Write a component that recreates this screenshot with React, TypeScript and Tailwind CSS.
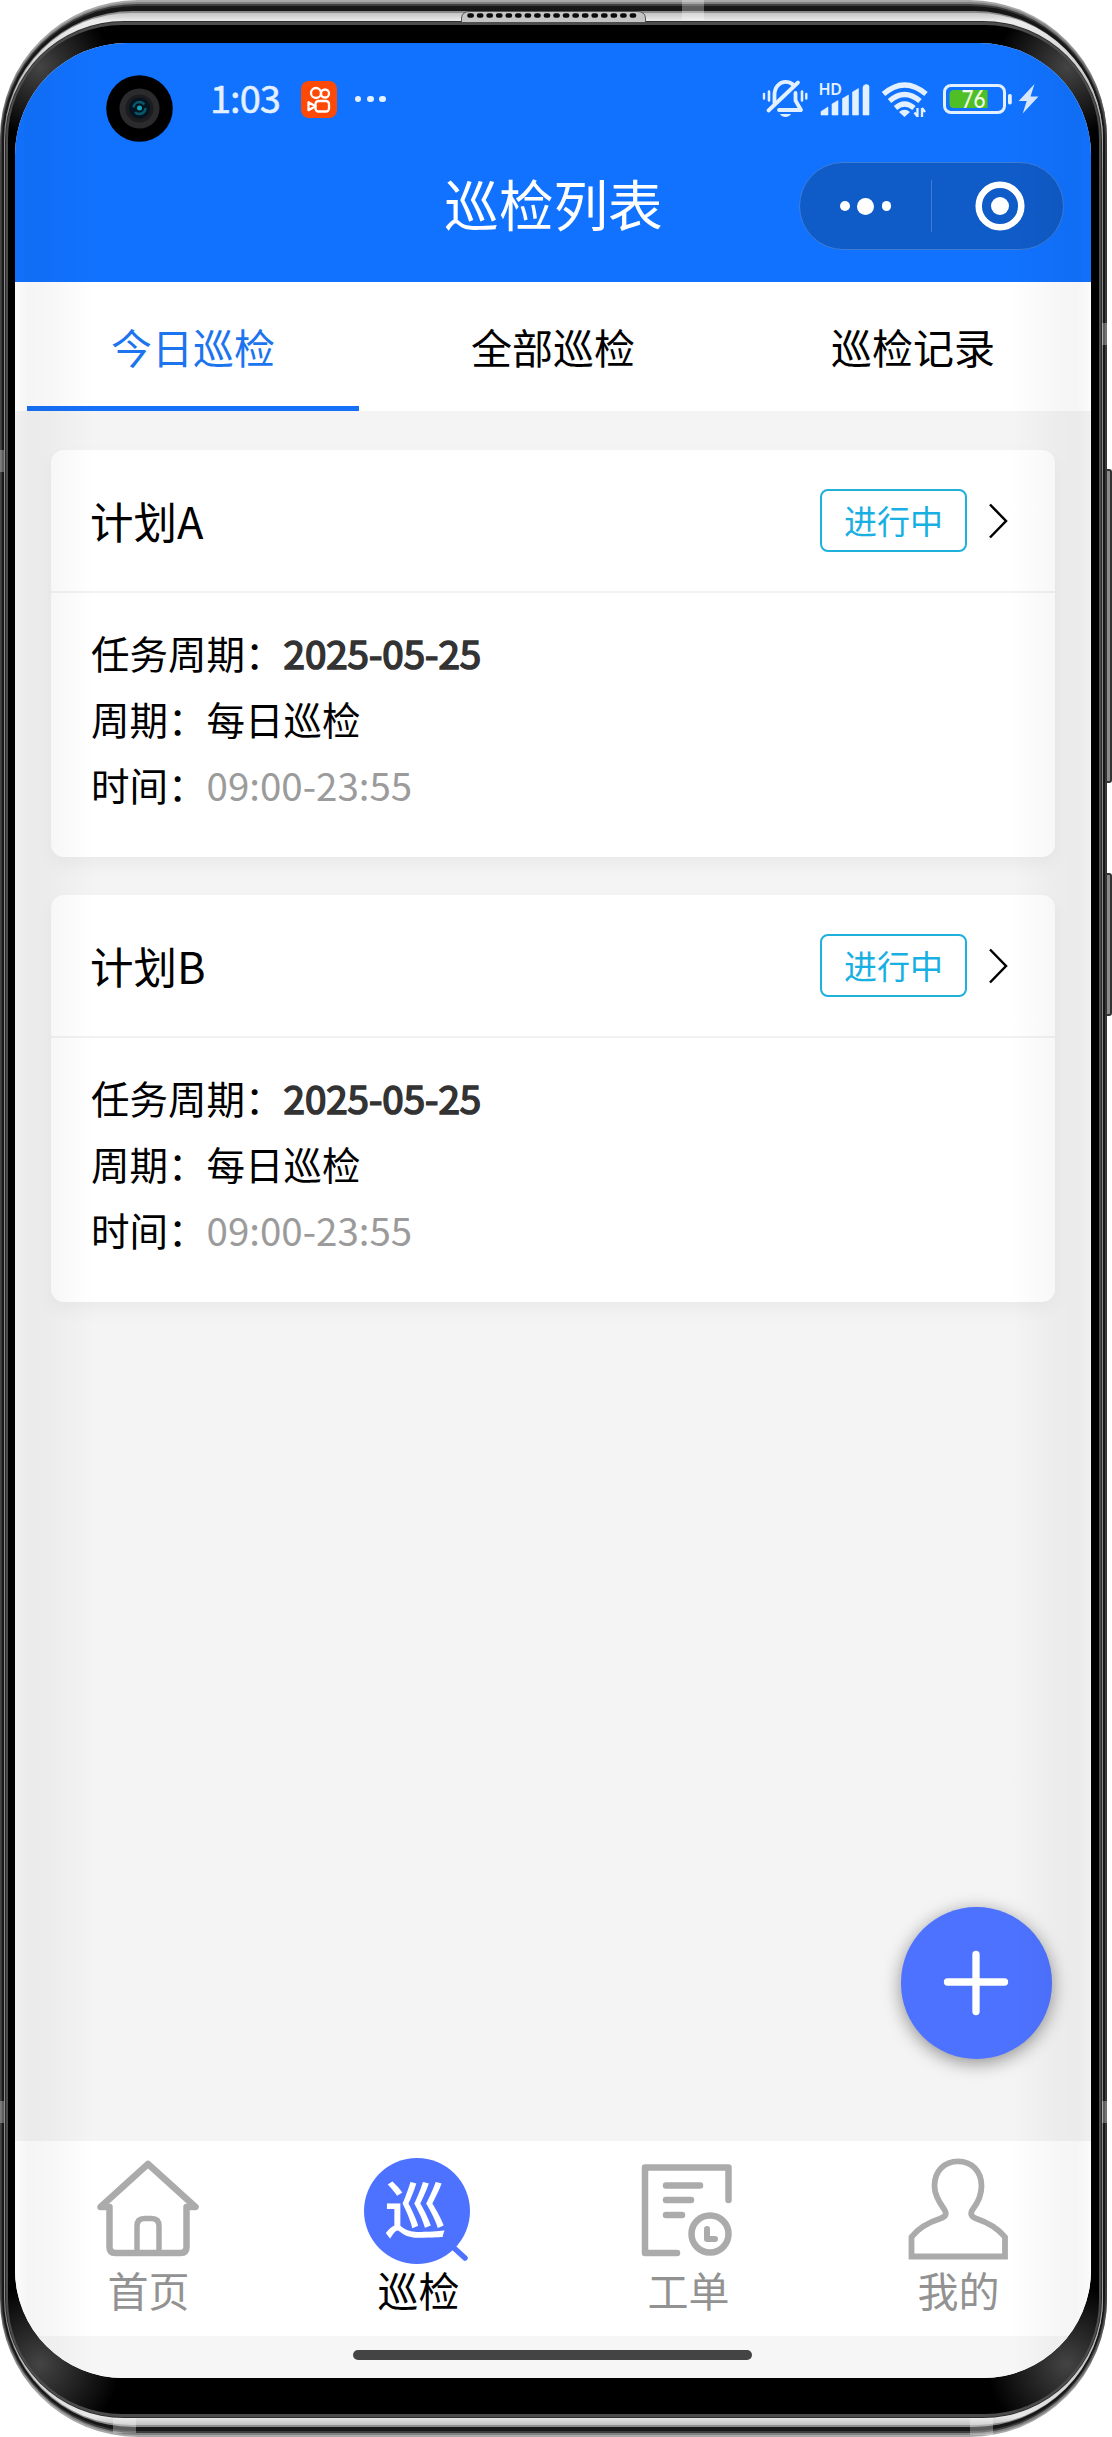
import { useState } from 'react';
import type { ReactNode } from 'react';

type Plan = { id: number; name: string; status: string; date: string; cycle: string; time: string };

const TABS = ['今日巡检', '全部巡检', '巡检记录'];

const PLANS: Plan[] = [
  { id: 1, name: '计划A', status: '进行中', date: '2025-05-25', cycle: '每日巡检', time: '09:00-23:55' },
  { id: 2, name: '计划B', status: '进行中', date: '2025-05-25', cycle: '每日巡检', time: '09:00-23:55' },
];

function Camera() {
  return (
    <svg className="w-[67px] h-[67px]" viewBox="0 0 67 67">
      <circle cx="33.5" cy="33.5" r="33.3" fill="#000" />
      <circle cx="33.5" cy="33.5" r="20" fill="#2b2b2d" />
      <circle cx="33.5" cy="33.5" r="14" fill="#1c1c1e" />
      <circle cx="33.5" cy="33" r="10.5" fill="#03131f" />
      <circle cx="33.5" cy="33" r="6" fill="none" stroke="#065a6c" strokeWidth="2.5" strokeDasharray="14 5" />
      <circle cx="33.5" cy="33" r="2.5" fill="#12a5b5" />
    </svg>
  );
}

function VideoAppIcon() {
  return (
    <svg className="w-9 h-[37px]" viewBox="0 0 36 37" fill="none" stroke="#fff" strokeWidth="2.3">
      <rect width="36" height="37" rx="8" fill="#ff4906" stroke="none" />
      <circle cx="15" cy="12" r="5" />
      <circle cx="24" cy="12.5" r="4" />
      <rect x="14.5" y="20" width="13.5" height="10.5" rx="3" />
      <path d="M14.5 25.2 7.5 21.2v8z" strokeLinejoin="round" />
    </svg>
  );
}

function MuteIcon() {
  return (
    <svg className="w-[46px] h-10" viewBox="762 80 46 40" fill="none" stroke="#e3f0ff" strokeWidth="3.8" strokeLinecap="round" strokeLinejoin="round">
      <path d="M774.5 104V96c0-8 5-13.2 11-13.2 3.2 0 5.500 1 7.300 2.700" />
      <path d="M768.500 111.500 798 83.500" />
      <path d="M795.500 94v7.500l5.500 9.500H779" />
      <path d="M780 115h11c-1.500 2.200-3.200 3-5.500 3s-4-.8-5.500-3z" fill="#e3f0ff" stroke="none" />
      <path d="M769 92.500v9M802 92.500v9" strokeWidth="2.600" />
      <path d="M764 95v4.500M806.300 95v4.500" strokeWidth="2.400" />
    </svg>
  );
}

function SignalIcon() {
  return (
    <svg className="w-[51px] h-[38px] -mt-1 overflow-visible" viewBox="819 78 51 38" fill="#e3f0ff">
      <text x="818.500" y="95" fontSize="16" fontWeight="600" textLength="23.500" className="font-['Noto_Sans']">HD</text>
      <path d="M821 115v-3.500l7-4.500v8zM832 115v-11l6-3.500V115zM842.500 115V98.500l6-3.500v20zM852.500 115V92l6-3.500V115zM863 115V87.500q0-2.500 3-3 3 0 3 2V115z" stroke="#e3f0ff" strokeWidth=".6" strokeLinejoin="round" />
    </svg>
  );
}

function WifiIcon() {
  return (
    <svg className="w-[47px] h-9" viewBox="881 82 47 36" fill="none" stroke="#e3f0ff" strokeWidth="5.200">
      <path d="M883.500 94q21-18 42.500 0" />
      <path d="M889.500 101q15-13 30.500 0" />
      <path d="M895.500 108q9-8 18.500 0" />
      <path d="M899 112q5.500-4.500 11 0l-5.500 5z" fill="#e3f0ff" stroke="none" />
      <path d="M917.500 117v-9M922 108v9M914.500 112.500l3 4M925 112l-3-4" strokeWidth="2.300" />
    </svg>
  );
}

function BatteryIcon() {
  return (
    <svg className="w-24 h-8" viewBox="943 83 96 32">
      <rect x="944.500" y="85.500" width="60" height="27" rx="6.500" fill="none" stroke="#e3f0ff" strokeWidth="3" />
      <path d="M954 90h33.500v18H954q-4.500 0-4.500-4.500v-9q0-4.500 4.500-4.500z" fill="#4fbf26" />
      <rect x="1008" y="94" width="3.800" height="10.500" rx="1.700" fill="#e3f0ff" />
      <text x="961.500" y="107.500" fontSize="24" fontWeight="500" fill="#f2fbe9" textLength="24" lengthAdjust="spacingAndGlyphs" className="font-['Lato']">76</text>
      <path d="M1034.500 84 1018.700 101h8l-4 12.500L1038.500 96.500h-8z" fill="#d8e8ff" />
    </svg>
  );
}

function StatusBar() {
  return (
    <div className="h-28 flex items-center text-[#e3f0ff]">
      <div className="ml-[93px] pt-[19px]"><Camera /></div>
      <span className="ml-[37px] w-[91px] pb-1 text-[38px] leading-none tracking-[-1px] [-webkit-text-stroke:0.500px]">1:03</span>
      <VideoAppIcon />
      <div className="ml-[18px] flex gap-[5.800px]">
        <i className="size-[6.400px] rounded-full bg-current" />
        <i className="size-[6.400px] rounded-full bg-current" />
        <i className="size-[6.400px] rounded-full bg-current" />
      </div>
      <div className="ml-auto mr-[54px] flex items-center">
        <MuteIcon />
        <div className="ml-[11px]"><SignalIcon /></div>
        <div className="ml-[11px] pt-[2px]"><WifiIcon /></div>
        <div className="ml-[15px]"><BatteryIcon /></div>
      </div>
    </div>
  );
}

function Capsule() {
  return (
    <div className="w-[265px] h-[88px] rounded-full border border-[#3f7cd6] bg-[#0f5bc8] flex items-center text-white">
      <div className="w-[131px] flex items-center justify-center gap-[7.500px]">
        <i className="size-[9.500px] rounded-full bg-white" />
        <i className="size-[17px] rounded-full bg-white" />
        <i className="size-[9.500px] rounded-full bg-white" />
      </div>
      <div className="w-px h-[52px] bg-[#3f7cd6]" />
      <div className="flex-1 pl-[5px] flex justify-center">
        <svg className="size-[50px]" viewBox="0 0 50 50">
          <circle cx="25" cy="25" r="21.300" fill="none" stroke="#fff" strokeWidth="6.500" />
          <circle cx="25" cy="25" r="9" fill="#fff" />
        </svg>
      </div>
    </div>
  );
}

function Header() {
  return (
    <header className="h-[239px] shrink-0 bg-[#1172ff]">
      <StatusBar />
      <div className="h-[102px] grid grid-cols-[1fr_auto_1fr] items-center">
        <div />
        <h1 className="pb-[6px] pl-px text-[54.600px] leading-none text-white">巡检列表</h1>
        <div className="flex justify-end pr-[29px]"><Capsule /></div>
      </div>
    </header>
  );
}

function PlanCard({ plan }: { plan: Plan }) {
  return (
    <article className="h-[407px] rounded-[13px] bg-white shadow-[0_8px_18px_rgba(0,0,0,0.045)]">
      <div className="h-[143px] flex items-center border-b-2 border-[#f2f2f2] pl-[39px] pr-[47px]">
        <h2 className="flex-1 pt-px text-[43.500px] leading-none">{plan.name}</h2>
        <span className="w-[147px] h-[63px] rounded-lg border-2 border-[#1fb0dc] text-[#18b0e2] text-[33px] leading-none flex items-center justify-center">
          {plan.status}
        </span>
        <svg className="ml-[21px] w-5 h-9" viewBox="0 0 20 36" fill="none" stroke="#000" strokeWidth="2.500">
          <path d="M2 1.500 18 18 2 34.500" />
        </svg>
      </div>
      <div className="pt-[26px] pl-10 text-[38.500px] leading-[66px]">
        <p>任务周期：<b className="font-normal text-[#333] [-webkit-text-stroke:1.700px_#333]">{plan.date}</b></p>
        <p>周期：{plan.cycle}</p>
        <p>时间：<span className="text-[#9b9b9b]">{plan.time}</span></p>
      </div>
    </article>
  );
}

function NavItem({ label, active, children }: { label: string; active?: boolean; children: ReactNode }) {
  return (
    <button className="flex-1 pt-[17px] pl-px flex flex-col items-center">
      <svg className="size-[106px] overflow-visible" viewBox="0 0 106 106" fill="none" stroke="#ababab" strokeWidth="6.500" strokeLinecap="round" strokeLinejoin="round">
        {children}
      </svg>
      <span className={active ? 'text-[41px] leading-[51px] text-black' : 'text-[41px] leading-[51px] text-[#929292]'}>
        {label}
      </span>
    </button>
  );
}

function BottomNav() {
  return (
    <nav className="h-[195px] shrink-0 bg-white flex">
      <NavItem label="首页">
        <path d="M13.500 49h-9L52 6l47.500 43H90.500v40q0 6-6 6H19.500q-6 0-6-6z" />
        <path d="M41 94V68q0-7.500 7.500-7.500h7q7.500 0 7.500 7.500v26" strokeWidth="5.500" />
      </NavItem>
      <NavItem label="巡检" active>
        <circle cx="51" cy="53" r="53" fill="#4d72ff" stroke="none" />
        <path d="m88 90 11 10" stroke="#4d72ff" strokeWidth="5.500" />
        <text x="49.500" y="76" textAnchor="middle" fontSize="62" fontWeight="500" fill="#fff" stroke="none">巡</text>
      </NavItem>
      <NavItem label="工单">
        <path d="M41 95H9V9.500H92.500V42" />
        <path d="M30 27.500h34M30 42h25M30 57h16" />
        <circle cx="74" cy="76" r="18.500" />
        <path d="M71 71v10H79" strokeWidth="6" />
      </NavItem>
      <NavItem label="我的">
        <path d="M5.500 98.500V79c7-9 18-15 29-18.500 6-2.500 6.500-5 3.500-9.500C31.500 42 28.500 35.500 28.500 28 28.500 13 38.500 3.300 52 3.300S75.500 13 75.500 28c0 8-2.500 15-8.500 23-3 4-2.500 7.500 3 9.500C80.500 64 91.500 70 99 79v19.500z" strokeLinejoin="miter" strokeWidth="5.800" />
      </NavItem>
    </nav>
  );
}

function Screen() {
  const [tab, setTab] = useState(0);

  return (
    <div className="-mx-[2px] h-full flex flex-col bg-[#f4f4f4]">
      <Header />
      <div className="h-[129px] shrink-0 flex bg-white">
        {TABS.map((label, i) => (
          <button key={label} onClick={() => setTab(i)} className="flex-1 flex flex-col items-center">
            <span className={i === tab ? 'flex-1 pt-[4px] text-[41px] leading-[120px] text-[#1c74ee]' : 'flex-1 pt-[4px] text-[41px] leading-[120px] text-black'}>
              {label}
            </span>
            {i === tab && <span className="w-[332px] h-[5px] bg-[#1670f8]" />}
          </button>
        ))}
      </div>

      <main className="flex-1 min-h-0 pt-[39px] px-[38px] flex flex-col gap-[38px]">
        {PLANS.map((plan) => (
          <PlanCard key={plan.id} plan={plan} />
        ))}
      </main>

      <BottomNav />
      <div className="h-[42px] shrink-0 bg-[#f6f6f6] flex justify-center pt-[14px]">
        <div className="w-[399px] h-[10px] -ml-[2px] rounded-full bg-[#444]" />
      </div>
    </div>
  );
}

function Speaker() {
  return (
    <svg className="absolute left-[461px] top-[11px] w-[185px] h-[11px]" viewBox="0 0 185 11">
      <path d="M.5 11V7Q1 .5 9 .5h167q8 0 8.500 6.500v4" fill="#c4c4c4" stroke="#555" />
      <path d="M8.500 4.500h171" stroke="#0a0a0a" strokeWidth="4.600" strokeLinecap="round" strokeDasharray="2.200 7.350" />
    </svg>
  );
}

function SideButton({ className }: { className: string }) {
  return <div className={`absolute left-[1105px] w-[7px] rounded-r-[3px] border-2 border-[#333] bg-[#8a8a8a] ${className}`} />;
}

export default function App() {
  return (
    <div className="relative w-[1112px] h-[2437px] overflow-hidden bg-white text-black font-['Noto_Sans_CJK_SC',sans-serif]">
      <SideButton className="top-[469px] h-[314px]" />
      <SideButton className="top-[873px] h-[143px]" />

      {/* metal body, from the outer rim inwards */}
      <div className="w-[1107px] h-full rounded-[138px] bg-[linear-gradient(#a8a8a8,#a8a8a8_40px,#444_160px,#444_calc(100%-160px),#a8a8a8_calc(100%-40px))] px-[0.500px] py-[2px]">
        <div className="h-full rounded-[137px] bg-[linear-gradient(#808080,#808080_40px,#333_160px,#333_calc(100%-160px),#808080_calc(100%-40px))] px-[0.500px] py-[2px]">
          <div className="h-full rounded-[136px] bg-[#3c3c3c] px-[1px] py-[2px]">
            <div className="h-full rounded-[134px] bg-[#171717] px-[2px] pt-[5px] pb-[4px]">
              <div className="h-full rounded-[129px] bg-[#8c8c8c] px-[0.500px] py-[2px]">
                <div className="h-full rounded-[126px] bg-[linear-gradient(#c4c4c4,#ededed_8px,#888_170px,#888_calc(100%-170px),#e8e8e8_calc(100%-8px),#c0c0c0)] px-[0.500px] pt-[8px] pb-[7px]">
                  <div className="h-full rounded-[119px] bg-[#2a2a2a] px-[1px] py-[1px]">
                    <div className="h-full rounded-[117px] bg-[#4c4c4c] px-[2px] py-[3px]">
                      <div className="h-full rounded-[114px] bg-black bg-[radial-gradient(circle_70px_at_32px_42px,#444,transparent),radial-gradient(circle_70px_at_calc(100%-32px)_42px,#444,transparent),radial-gradient(circle_80px_at_32px_calc(100%-50px),#444,transparent),radial-gradient(circle_80px_at_calc(100%-32px)_calc(100%-50px),#444,transparent)] pl-[7px] pr-[8px] pt-[18px] pb-[36px]">
                        <div className="relative h-full overflow-hidden rounded-t-[112px] rounded-b-[108px]">
                          <Screen />
                          <button className="absolute left-[886px] top-[1864px] w-[151px] h-[152px] rounded-full bg-[#4d72ff] shadow-[0_4px_18px_rgba(0,0,0,0.42)] flex items-center justify-center">
                            <svg className="size-[66px] -ml-px" viewBox="0 0 66 66" stroke="#fff" strokeWidth="7.300" strokeLinecap="round">
                              <path d="M33 4.500v57M4.500 32h57" />
                            </svg>
                          </button>
                          {/* curved glass shading on both edges */}
                          <div className="absolute inset-y-0 left-0 w-20 pointer-events-none bg-[linear-gradient(90deg,rgba(0,0,0,0.015),rgba(0,0,0,0.038)_14px,rgba(0,0,0,0.03)_36px,transparent)]" />
                          <div className="absolute inset-y-0 right-0 w-20 pointer-events-none bg-[linear-gradient(270deg,rgba(0,0,0,0.015),rgba(0,0,0,0.038)_14px,rgba(0,0,0,0.03)_36px,transparent)]" />
                        </div>
                      </div>
                    </div>
                  </div>
                </div>
              </div>
            </div>
          </div>
        </div>
      </div>

      <Speaker />

      {/* antenna bands */}
      <div className="absolute left-[682px] top-0 w-[22px] h-5 bg-white/30" />
      <div className="absolute left-[113px] top-[2418px] w-[23px] h-[15px] bg-white/30" />
      <div className="absolute left-[970px] top-[2418px] w-[23px] h-[17px] bg-white/30" />
      <div className="absolute left-0 top-[450px] w-1 h-[22px] bg-white/30" />
      <div className="absolute left-0 top-[2101px] w-1 h-[22px] bg-white/30" />
      <div className="absolute left-[1102px] top-[323px] w-[5px] h-[22px] bg-white/30" />
      <div className="absolute left-[1102px] top-[2101px] w-[5px] h-[22px] bg-white/30" />
    </div>
  );
}
